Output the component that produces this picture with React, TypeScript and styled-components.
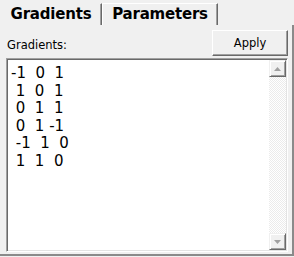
import styled, { createGlobalStyle } from "styled-components";

const GlobalStyle = createGlobalStyle`
   body {
      margin: 0;
      background: #f0f0f0;
      font-family: "DejaVu Sans", Tahoma, sans-serif;
   }
`;

const rows = ["-1  0  1", " 1  0  1", " 0  1  1", " 0  1 -1", " -1  1  0", " 1  1  0"];

function ScrollArrow({ down }: { down?: boolean }) {
   return (
      <svg width="7" height="4" viewBox="0 0 7 4">
         <polygon
            points={down ? "0,0 7,0 3.5,4" : "0,4 7,4 3.5,0"}
            fill="#a0a0a0"
         />
      </svg>
   );
}

function App() {
   return (
      <>
         <GlobalStyle />
         <Window>
            <TabStrip>
               <Tab $active $width={102}>Gradients</Tab>
               <Tab $width={116}>Parameters</Tab>
            </TabStrip>
            <Panel>
               <Header>
                  <Label>Gradients:</Label>
                  <Button type="button">Apply</Button>
               </Header>
               <Frame>
                  <Content>
                     {rows.map((row, i) => (
                        <Row key={i}>{row}</Row>
                     ))}
                  </Content>
                  <ScrollBar>
                     <ScrollButton>
                        <ScrollArrow />
                     </ScrollButton>
                     <Track />
                     <ScrollButton>
                        <ScrollArrow down />
                     </ScrollButton>
                  </ScrollBar>
               </Frame>
            </Panel>
         </Window>
      </>
   );
}

export default App;

const Window = styled.div`
   width: 294px;
   height: 257px;
   background: #f0f0f0;
   display: flex;
   flex-direction: column;
`;

const TabStrip = styled.div`
   height: 25px;
   display: flex;
   align-items: flex-end;
`;

const Tab = styled.div<{ $active?: boolean; $width: number }>`
   box-sizing: border-box;
   width: ${(p) => p.$width}px;
   height: 22px;
   display: flex;
   align-items: center;
   justify-content: center;
   padding-bottom: 1px;
   font-family: "DejaVu Sans", Tahoma, sans-serif;
   font-weight: bold;
   font-size: 15px;
   letter-spacing: -0.2px;
   color: #000;
   border-top: 1px solid ${(p) => (p.$active ? "#f0f0f0" : "#ffffff")};
   border-left: 1px solid ${(p) => (p.$active ? "#f0f0f0" : "#ffffff")};
   border-right: 1px solid #696969;
   box-shadow: inset -1px 0 0 #a0a0a0;
`;

const Panel = styled.div`
   box-sizing: border-box;
   width: 294px;
   height: 231px;
   padding: 5px 4px 2px 6px;
   border-right: 2px solid #8a8a8a;
   border-bottom: 2px solid #8a8a8a;
   display: flex;
   flex-direction: column;
`;

const Header = styled.div`
   height: 26px;
   margin-bottom: 2px;
   display: flex;
   justify-content: space-between;
   align-items: flex-start;
`;

const Label = styled.span`
   margin-top: 8px;
   padding-left: 1px;
   font-size: 11.5px;
   color: #000;
`;

const Button = styled.button`
   box-sizing: border-box;
   width: 76px;
   height: 26px;
   margin: 0;
   padding: 0 0 1px;
   font-family: "DejaVu Sans", Tahoma, sans-serif;
   font-size: 11.5px;
   color: #000;
   background: #f0f0f0;
   border: 1px solid;
   border-color: #ffffff #696969 #696969 #ffffff;
   box-shadow: inset -1px -1px 0 #a0a0a0;
`;

const Frame = styled.div`
   box-sizing: border-box;
   height: 194px;
   display: flex;
   background: #fff;
   border: 1px solid;
   border-color: #a0a0a0 #ffffff #ffffff #a0a0a0;
   box-shadow: inset 1px 1px 0 #696969, inset -1px -1px 0 #e3e3e3;
   padding: 1px;
`;

const Content = styled.div`
   flex: 1;
   padding: 5px 3px;
   font-family: "DejaVu Sans", Tahoma, sans-serif;
   font-size: 15px;
   line-height: 17.6px;
   color: #000;
`;

const Row = styled.div`
   white-space: pre;
`;

const ScrollBar = styled.div`
   width: 17px;
   display: flex;
   flex-direction: column;
`;

const ScrollButton = styled.div`
   box-sizing: border-box;
   height: 17px;
   display: flex;
   align-items: center;
   justify-content: center;
   background: #f0f0f0;
   border: 1px solid;
   border-color: #f0f0f0 #696969 #696969 #f0f0f0;
   box-shadow: inset 1px 1px 0 #ffffff, inset -1px -1px 0 #a0a0a0;
`;

const Track = styled.div`
   flex: 1;
   background: repeating-conic-gradient(#ffffff 0 25%, #ebebeb 0 50%) 0 0 / 2px 2px;
`;
